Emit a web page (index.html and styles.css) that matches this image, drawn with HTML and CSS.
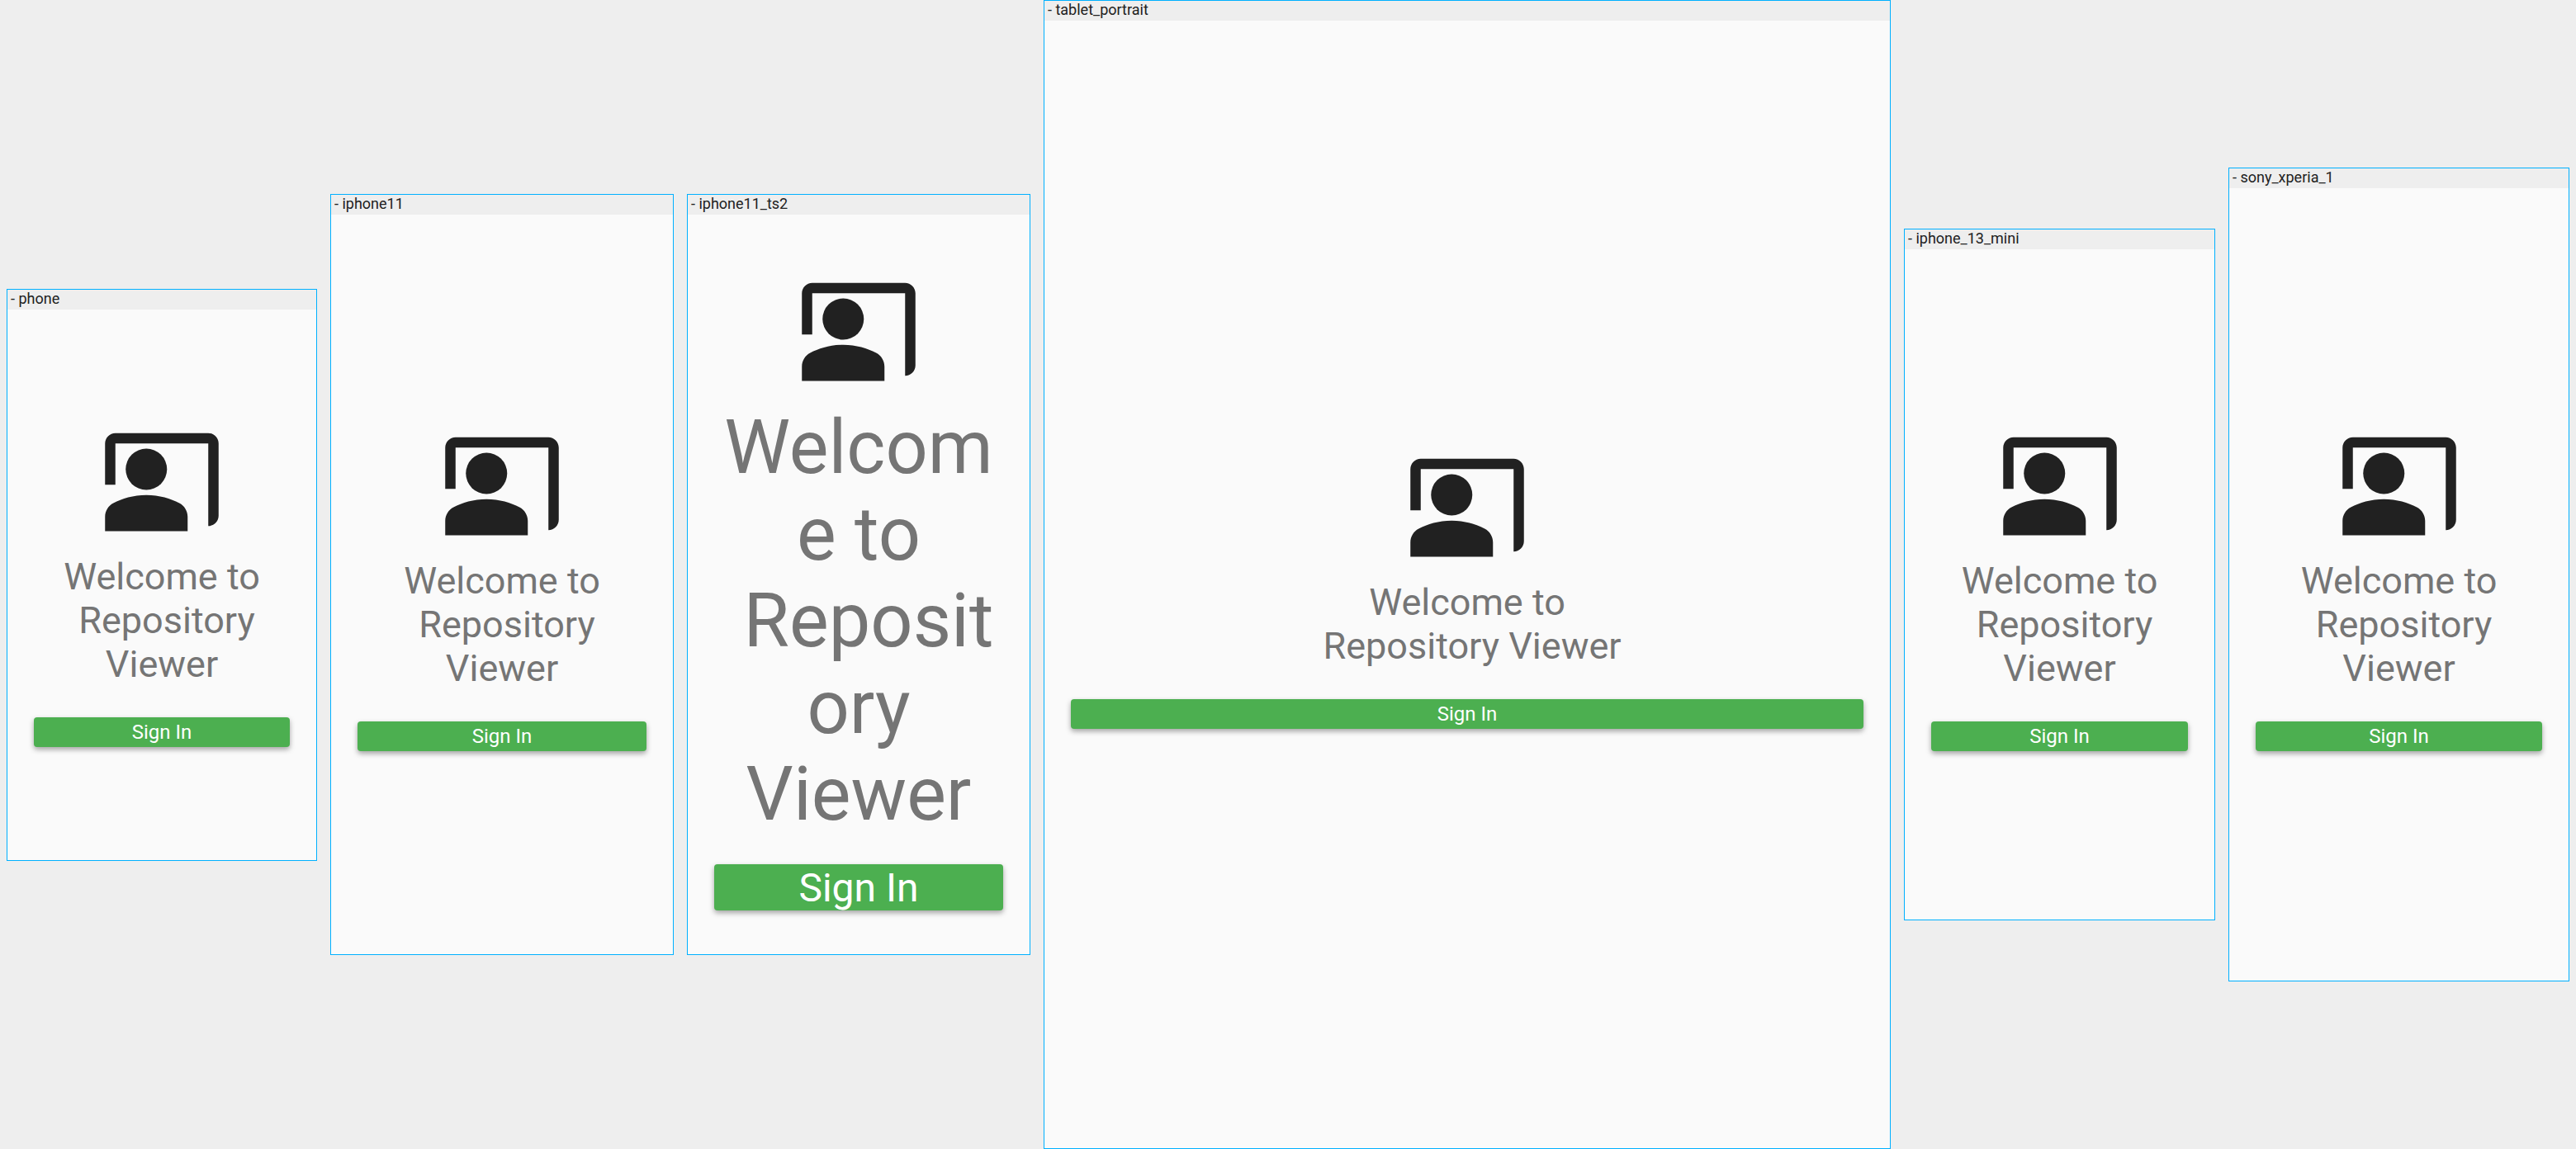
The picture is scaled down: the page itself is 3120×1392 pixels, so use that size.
FILE: index.html
```html
<!DOCTYPE html>
<html lang="en">
<head>
    <meta charset="UTF-8">
    <title>Repository Viewer goldens</title>
    <link rel="stylesheet" href="styles.css">
</head>
<body>
    <svg class="defs" width="0" height="0">
        <symbol id="co-present" viewBox="0 0 24 24">
            <path d="M21,3H3C1.9,3,1,3.9,1,5v8h2V5h18v16c1.1,0,2-0.9,2-2V5C23,3.9,22.1,3,21,3z"/>
            <circle cx="9" cy="10" r="4"/>
            <path d="M15.39,16.56C13.71,15.7,11.53,15,9,15c-2.53,0-4.71,0.7-6.39,1.56C1.61,17.07,1,18.1,1,19.22V22h16v-2.78C17,18.1,16.39,17.07,15.39,16.56z"/>
        </symbol>
    </svg>

    <section class="device phone">
        <div class="device-label">- phone</div>
        <div class="screen">
            <svg class="logo"><use href="#co-present"/></svg>
            <h1 class="welcome">Welcome to<br><span class="nudge">Repository</span><br>Viewer</h1>
            <div class="button-slot"><button class="sign-in">Sign In</button></div>
        </div>
    </section>

    <section class="device iphone11">
        <div class="device-label">- iphone11</div>
        <div class="screen">
            <svg class="logo"><use href="#co-present"/></svg>
            <h1 class="welcome">Welcome to<br><span class="nudge">Repository</span><br>Viewer</h1>
            <div class="button-slot"><button class="sign-in">Sign In</button></div>
        </div>
    </section>

    <section class="device iphone11 large-text">
        <div class="device-label">- iphone11_ts2</div>
        <div class="screen">
            <svg class="logo"><use href="#co-present"/></svg>
            <h1 class="welcome">Welcom<br>e to<br><span class="nudge">Reposit</span><br>ory<br>Viewer</h1>
            <div class="button-slot"><button class="sign-in">Sign In</button></div>
        </div>
    </section>

    <section class="device tablet">
        <div class="device-label">- tablet_portrait</div>
        <div class="screen">
            <svg class="logo"><use href="#co-present"/></svg>
            <h1 class="welcome">Welcome to<br><span class="nudge">Repository Viewer</span></h1>
            <div class="button-slot"><button class="sign-in">Sign In</button></div>
        </div>
    </section>

    <section class="device mini">
        <div class="device-label">- iphone_13_mini</div>
        <div class="screen">
            <svg class="logo"><use href="#co-present"/></svg>
            <h1 class="welcome">Welcome to<br><span class="nudge">Repository</span><br>Viewer</h1>
            <div class="button-slot"><button class="sign-in">Sign In</button></div>
        </div>
    </section>

    <section class="device xperia">
        <div class="device-label">- sony_xperia_1</div>
        <div class="screen">
            <svg class="logo"><use href="#co-present"/></svg>
            <h1 class="welcome">Welcome to<br><span class="nudge">Repository</span><br>Viewer</h1>
            <div class="button-slot"><button class="sign-in">Sign In</button></div>
        </div>
    </section>
</body>
</html>
```

FILE: styles.css
```css
body {
    margin: 0;
    padding: 0 8px;
    height: 1392px;
    display: flex;
    align-items: center;
    gap: 16px;
    background-color: #eeeeee;
    font-family: Roboto, sans-serif;
    overflow: hidden;
}

.defs {
    position: absolute;
}

.device {
    display: flex;
    flex-direction: column;
    flex-shrink: 0;
    box-sizing: border-box;
    border: 1px solid #00b0ff;
    background-color: #fafafa;
}

.phone { width: 376px; height: 693px; }
.iphone11 { width: 416px; height: 922px; }
.tablet { width: 1026px; height: 1392px; }
.mini { width: 377px; height: 838px; }
.xperia { width: 413px; height: 986px; }

.device-label {
    height: 24px;
    padding-left: 4px;
    background-color: #eeeeee;
    color: #212121;
    font-size: 18px;
    line-height: 22px;
}

.screen {
    flex: 1;
    display: flex;
    flex-direction: column;
    align-items: center;
    justify-content: center;
    padding: 10px 32px 0;
}

.phone .screen {
    padding-top: 0;
}

.logo {
    width: 150px;
    height: 150px;
    fill: #212121;
}

.welcome {
    margin: 16px 0 32px;
    color: #757575;
    font-size: 45px;
    font-weight: 400;
    line-height: 53px;
    text-align: center;
}

.nudge {
    padding-left: 12px;
}

.button-slot {
    align-self: stretch;
    min-height: 48px;
    display: flex;
    align-items: center;
}

.sign-in {
    width: 100%;
    height: 36px;
    padding: 0;
    border: none;
    border-radius: 4px;
    background-color: #4caf50;
    box-shadow: 0 3px 6px rgba(0, 0, 0, 0.35);
    color: white;
    font-family: Roboto, sans-serif;
    font-size: 24px;
    font-weight: 400;
}

.large-text .welcome {
    font-size: 90px;
    line-height: 105px;
}

.large-text .nudge {
    padding-left: 24px;
}

.large-text .sign-in {
    height: 56px;
    font-size: 48px;
}
```
